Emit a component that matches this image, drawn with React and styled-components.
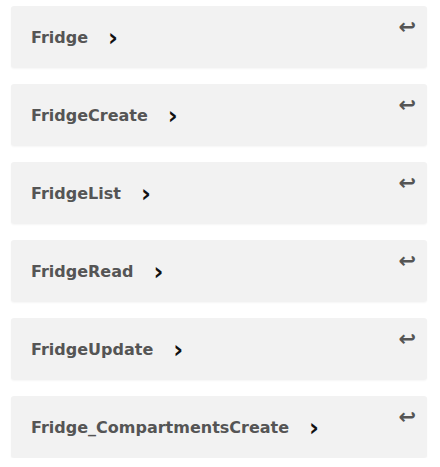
import React from "react";
import styled, { createGlobalStyle } from "styled-components";

const GlobalStyle = createGlobalStyle`
  body {
    margin: 0;
    background: #ffffff;
    font-family: "DejaVu Sans", sans-serif;
  }
`;

const List = styled.div`
  display: flex;
  flex-direction: column;
  gap: 16px;
  padding: 6px 0 0 11px;
  width: 416px;
`;

const Card = styled.div`
  position: relative;
  display: flex;
  align-items: center;
  height: 62px;
  padding-left: 20px;
  background: #f2f2f2;
  border-radius: 3px;
  box-shadow: 0 1px 2px rgba(0, 0, 0, 0.04);
  box-sizing: border-box;
`;

const Title = styled.span`
  font-size: 16px;
  font-weight: bold;
  color: #555555;
`;

const Chevron = styled.span`
  margin-left: 20px;
  margin-top: 2px;
  font-size: 24px;
  line-height: 1;
  font-weight: bold;
  color: #111111;
`;

const Return = styled.span`
  position: absolute;
  top: 11px;
  right: 11px;
  font-size: 21px;
  line-height: 1;
  font-weight: bold;
  color: #555555;
`;

const items = [
  "Fridge",
  "FridgeCreate",
  "FridgeList",
  "FridgeRead",
  "FridgeUpdate",
  "Fridge_CompartmentsCreate",
];

export default function App() {
  return (
    <>
      <GlobalStyle />
      <List>
        {items.map((name) => (
          <Card key={name}>
            <Title>{name}</Title>
            <Chevron>›</Chevron>
            <Return>↩</Return>
          </Card>
        ))}
      </List>
    </>
  );
}
